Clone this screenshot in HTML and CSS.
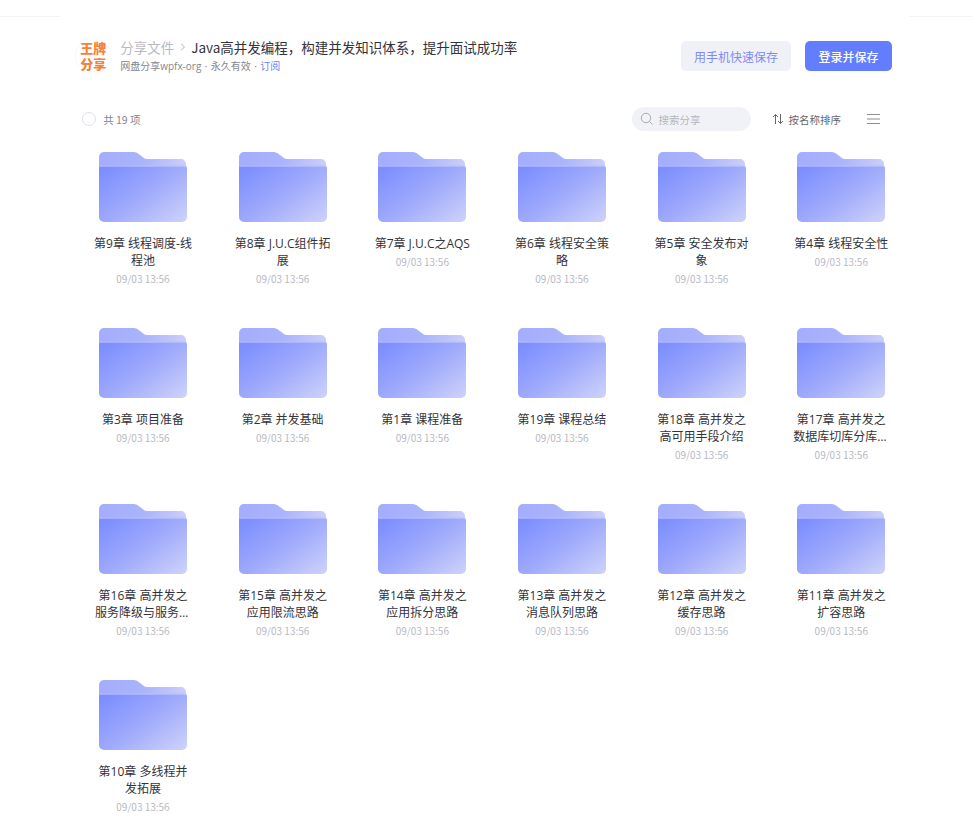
FILE: index.html
```html
<!DOCTYPE html>
<html lang="zh-CN">
<head>
    <meta charset="UTF-8">
    <meta name="viewport" content="width=device-width, initial-scale=1.0">
    <title>Java高并发编程，构建并发知识体系，提升面试成功率</title>
    <link rel="stylesheet" href="styles.css">
</head>
<body>
    <svg class="defs" width="0" height="0" aria-hidden="true">
        <defs>
            <linearGradient id="folder-front" x1="0.05" y1="0.1" x2="1" y2="0.95">
                <stop offset="0" stop-color="#7d8fff"/>
                <stop offset="0.5" stop-color="#a0abfb"/>
                <stop offset="1" stop-color="#ccd1fa"/>
            </linearGradient>
            <linearGradient id="folder-back" x1="0" y1="0" x2="1" y2="0">
                <stop offset="0" stop-color="#a3adfc"/>
                <stop offset="0.5" stop-color="#aab3fb"/>
                <stop offset="1" stop-color="#cbcff8"/>
            </linearGradient>
            <symbol id="folder" viewBox="0 0 88 70">
                <path d="M0 5a5 5 0 0 1 5-5h29c2 0 3.500.5 5 1.500l6 4.500c1 .8 2 1 3.500 1H82a5 5 0 0 1 5 5v40H0z" fill="url(#folder-back)"/>
                <path d="M0 16.500a3 3 0 0 1 3-3h82a3 3 0 0 1 3 3V65a5 5 0 0 1-5 5H5a5 5 0 0 1-5-5z" fill="url(#folder-front)"/>
                <path d="M1 14h86" stroke="#d3d7fb" stroke-width="1" opacity=".8"/>
            </symbol>
        </defs>
    </svg>

    <div class="topline">
        <div class="topline-part"></div>
        <div class="topline-gap"></div>
        <div class="topline-part topline-right"></div>
    </div>

    <div class="page">
        <header class="header">
            <div class="logo">
                <span>王牌</span>
                <span>分享</span>
            </div>
            <div class="info">
                <div class="crumbs">
                    <span class="crumb-root">分享文件</span>
                    <svg class="crumb-arrow" width="6" height="8" viewBox="0 0 6 8"><path d="M1 .8 4.500 4 1 7.200" fill="none" stroke="#b5b5bd" stroke-width="1"/></svg>
                    <span class="crumb-title">Java高并发编程，构建并发知识体系，提升面试成功率</span>
                </div>
                <div class="meta">网盘分享wpfx-org · 永久有效 · <span class="subscribe">订阅</span></div>
            </div>
            <div class="actions">
                <button class="btn btn-light">用手机快速保存</button>
                <button class="btn btn-primary">登录并保存</button>
            </div>
        </header>

        <div class="toolbar">
            <span class="check"></span>
            <span class="count">共 19 项</span>
            <div class="search">
                <svg width="14" height="14" viewBox="0 0 14 14"><circle cx="6" cy="6" r="4.700" fill="none" stroke="#a9abb5"/><path d="m9.500 9.500 3 3" stroke="#a9abb5" fill="none"/></svg>
                <span>搜索分享</span>
            </div>
            <div class="sort">
                <svg width="12" height="12" viewBox="0 0 12 12"><path d="M3.500 11V1.500M1 4l2.500-2.500L6 4M8.500 1v9.500M6 8l2.500 2.500L11 8" fill="none" stroke="#666"/></svg>
                <span>按名称排序</span>
            </div>
            <svg class="menu" width="13" height="10" viewBox="0 0 13 10"><path d="M0 .5h13M0 5h13M0 9.500h13" stroke="#8d8d94"/></svg>
        </div>

        <div class="grid">
            <div class="item"><svg class="folder"><use href="#folder"/></svg><div class="name">第9章 线程调度-线程池</div><div class="time">09/03 13:56</div></div>
            <div class="item"><svg class="folder"><use href="#folder"/></svg><div class="name">第8章 J.U.C组件拓展</div><div class="time">09/03 13:56</div></div>
            <div class="item"><svg class="folder"><use href="#folder"/></svg><div class="name">第7章 J.U.C之AQS</div><div class="time">09/03 13:56</div></div>
            <div class="item"><svg class="folder"><use href="#folder"/></svg><div class="name">第6章 线程安全策略</div><div class="time">09/03 13:56</div></div>
            <div class="item"><svg class="folder"><use href="#folder"/></svg><div class="name">第5章 安全发布对象</div><div class="time">09/03 13:56</div></div>
            <div class="item"><svg class="folder"><use href="#folder"/></svg><div class="name">第4章 线程安全性</div><div class="time">09/03 13:56</div></div>
            <div class="item"><svg class="folder"><use href="#folder"/></svg><div class="name">第3章 项目准备</div><div class="time">09/03 13:56</div></div>
            <div class="item"><svg class="folder"><use href="#folder"/></svg><div class="name">第2章 并发基础</div><div class="time">09/03 13:56</div></div>
            <div class="item"><svg class="folder"><use href="#folder"/></svg><div class="name">第1章 课程准备</div><div class="time">09/03 13:56</div></div>
            <div class="item"><svg class="folder"><use href="#folder"/></svg><div class="name">第19章 课程总结</div><div class="time">09/03 13:56</div></div>
            <div class="item"><svg class="folder"><use href="#folder"/></svg><div class="name">第18章 高并发之高可用手段介绍</div><div class="time">09/03 13:56</div></div>
            <div class="item"><svg class="folder"><use href="#folder"/></svg><div class="name">第17章 高并发之数据库切库分库分表思路</div><div class="time">09/03 13:56</div></div>
            <div class="item"><svg class="folder"><use href="#folder"/></svg><div class="name">第16章 高并发之服务降级与服务熔断思路</div><div class="time">09/03 13:56</div></div>
            <div class="item"><svg class="folder"><use href="#folder"/></svg><div class="name">第15章 高并发之应用限流思路</div><div class="time">09/03 13:56</div></div>
            <div class="item"><svg class="folder"><use href="#folder"/></svg><div class="name">第14章 高并发之应用拆分思路</div><div class="time">09/03 13:56</div></div>
            <div class="item"><svg class="folder"><use href="#folder"/></svg><div class="name">第13章 高并发之消息队列思路</div><div class="time">09/03 13:56</div></div>
            <div class="item"><svg class="folder"><use href="#folder"/></svg><div class="name">第12章 高并发之缓存思路</div><div class="time">09/03 13:56</div></div>
            <div class="item"><svg class="folder"><use href="#folder"/></svg><div class="name">第11章 高并发之扩容思路</div><div class="time">09/03 13:56</div></div>
            <div class="item"><svg class="folder"><use href="#folder"/></svg><div class="name">第10章 多线程并发拓展</div><div class="time">09/03 13:56</div></div>
        </div>
    </div>
</body>
</html>
```

FILE: styles.css
```css
html, body {
    margin: 0;
    padding: 0;
    height: 824px;
    overflow: hidden;
    background-color: #fff;
}
body {
    font-family: "Noto Sans CJK SC", "Open Sans", sans-serif;
    color: #333;
}
.defs {
    display: block;
    height: 0;
}
.topline {
    display: flex;
    padding-top: 16px;
}
.topline-part {
    flex: 0 0 60px;
    height: 1px;
    background-color: #f2f2f8;
}
.topline-right {
    flex-basis: 64px;
}
.topline-gap {
    flex: 1;
}
.page {
    padding: 0 81px 0 73.17px;
}
.header {
    display: flex;
    align-items: center;
    height: 46px;
    margin-top: 16px;
    padding-left: 2px;
}
.logo {
    flex: none;
    box-sizing: border-box;
    width: 36px;
    height: 36px;
    padding-top: 1px;
    border: 1px dotted #f1f1f4;
    border-radius: 50%;
    color: #f5813a;
    font-size: 13px;
    font-weight: 900;
    line-height: 16px;
    text-align: center;
    white-space: nowrap;
}
.logo span {
    display: block;
}
.info {
    flex: 1;
    margin-left: 9px;
}
.crumbs {
    display: flex;
    align-items: center;
    height: 18px;
    font-size: 13.5px;
}
.crumb-root {
    color: #b9b9c0;
}
.crumb-arrow {
    margin: 0 5.500px;
}
.crumb-title {
    color: #33333b;
}
.meta {
    margin-top: 2px;
    color: #85858d;
    font-family: "Open Sans", "Noto Sans CJK SC", sans-serif;
    font-size: 10px;
    line-height: 16px;
    word-spacing: 0.8px;
}
.subscribe {
    color: #6b80ff;
}
.actions {
    display: flex;
    gap: 14px;
}
.btn {
    height: 30px;
    border: 0;
    border-radius: 5px;
    font-family: inherit;
    font-size: 12px;
}
.btn-light {
    width: 110px;
    background-color: #f0f1f7;
    color: #7c8cf5;
}
.btn-primary {
    width: 87px;
    background-color: #637dff;
    color: #fff;
    font-weight: 500;
}
.toolbar {
    display: flex;
    align-items: center;
    height: 24px;
    margin-top: 28px;
    padding-left: 9px;
    font-size: 10.5px;
}
.check {
    box-sizing: border-box;
    width: 14px;
    height: 14px;
    border: 1px solid #dfe0ee;
    border-radius: 50%;
}
.count {
    margin-left: 7px;
    color: #85858d;
}
.search {
    display: flex;
    align-items: center;
    gap: 5px;
    box-sizing: border-box;
    width: 119px;
    height: 24px;
    margin-left: auto;
    padding-left: 8px;
    border-radius: 12px;
    background-color: #f1f2f7;
    color: #b5b6bd;
}
.sort {
    display: flex;
    align-items: center;
    gap: 5px;
    margin-left: 21px;
    color: #66666d;
}
.menu {
    margin-left: 26px;
    margin-right: 12px;
}
.grid {
    display: grid;
    grid-template-columns: repeat(6, 139.67px);
    grid-auto-rows: 176px;
    margin-top: 21px;
}
.item {
    display: flex;
    flex-direction: column;
    align-items: center;
}
.folder {
    flex: none;
    width: 88px;
    height: 70px;
}
.name {
    display: -webkit-box;
    -webkit-box-orient: vertical;
    -webkit-line-clamp: 2;
    overflow: hidden;
    width: 99px;
    margin-top: 13px;
    color: #33333b;
    font-family: "Open Sans", "Noto Sans CJK SC", sans-serif;
    font-size: 12px;
    line-height: 17px;
    text-align: center;
}
.time {
    margin-top: 3px;
    color: #b8b9c2;
    font-size: 10px;
    line-height: 14px;
}
```
